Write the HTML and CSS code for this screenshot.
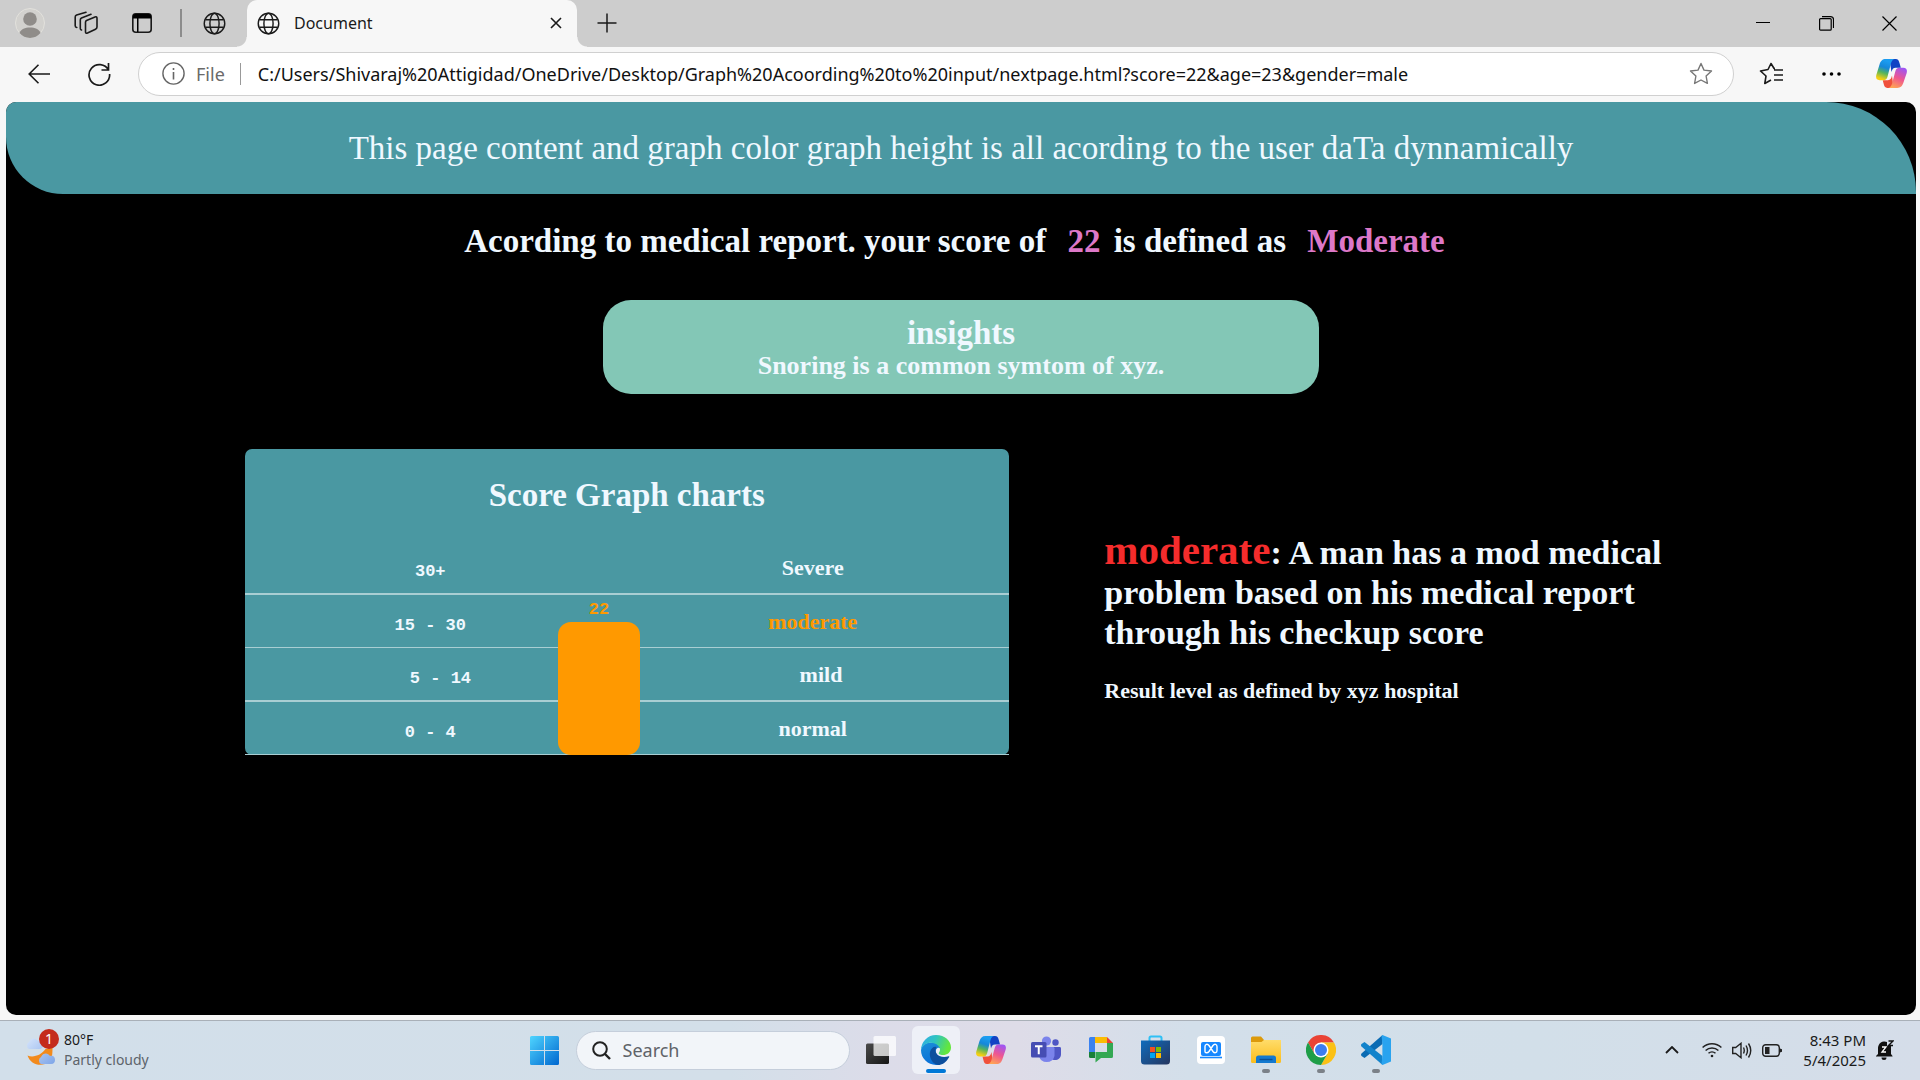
FILE: index.html
```html
<!DOCTYPE html>
<html lang="en">
<head>
<meta charset="utf-8">
<title>Document</title>
<link rel="stylesheet" href="styles.css">
</head>
<body>
<svg class="defs" width="0" height="0" aria-hidden="true">
  <defs>
    <linearGradient id="cpA" x1="0.6" y1="0" x2="0.3" y2="1"><stop offset="0.1" stop-color="#1b9cf0"/><stop offset="0.4" stop-color="#1687d9"/><stop offset="0.65" stop-color="#55b45e"/><stop offset="0.95" stop-color="#f5cf12"/></linearGradient>
    <linearGradient id="cpB" x1="0.7" y1="0" x2="0.3" y2="1"><stop offset="0" stop-color="#9f55f3"/><stop offset="0.5" stop-color="#ef5690"/><stop offset="1" stop-color="#ffa454"/></linearGradient>
    <linearGradient id="win" x1="0" y1="0" x2="1" y2="1"><stop offset="0" stop-color="#4fd5ff"/><stop offset="1" stop-color="#0067cf"/></linearGradient>
    <linearGradient id="edA" x1="0" y1="0" x2="1" y2="0.3"><stop offset="0" stop-color="#2fa9ec"/><stop offset="0.5" stop-color="#2fc4c0"/><stop offset="1" stop-color="#63e63d"/></linearGradient>
    <linearGradient id="edB" x1="0" y1="0" x2="0.4" y2="1"><stop offset="0" stop-color="#1b8ed8"/><stop offset="1" stop-color="#0a6fd8"/></linearGradient>
    <linearGradient id="store" x1="0" y1="0" x2="1" y2="1"><stop offset="0" stop-color="#0f6cbd"/><stop offset="1" stop-color="#26365f"/></linearGradient>
    <linearGradient id="fold" x1="0" y1="0" x2="0" y2="1"><stop offset="0" stop-color="#ffdc6a"/><stop offset="1" stop-color="#fbbd1c"/></linearGradient>
    <linearGradient id="cloud" x1="0" y1="0" x2="1" y2="1"><stop offset="0" stop-color="#d5e4fb"/><stop offset="1" stop-color="#7da5e8"/></linearGradient>
    <linearGradient id="tvA" x1="0" y1="0" x2="1" y2="1"><stop offset="0" stop-color="#4a4a4a"/><stop offset="1" stop-color="#161616"/></linearGradient>
    <symbol id="globe" viewBox="0 0 24 24"><g fill="none" stroke="currentColor" stroke-width="1.5"><circle cx="12" cy="12" r="10.7"/><ellipse cx="12" cy="12" rx="4.8" ry="10.7"/><path d="M2.4 8h19.2M2.4 16h19.2"/></g></symbol>
    <symbol id="copilot" viewBox="0 0 30 28">
      <path fill="#1142c4" d="M13 0h6c2.300 0 3.200 1.500 3.800 4l1.200 4.500h-5c-2.400 0-3.300 1.500-4 4z"/>
      <path fill="#f0503c" d="M17 28h-6c-2.300 0-3-1.500-3.600-4l-.9-3.500h5c2.400 0 3.300-1.700 4-4.500z"/>
      <path fill="url(#cpA)" d="M9.500 0H18c-2.500.5-3.300 3-4 6l-2.800 11c-.7 2.500-1.700 3.500-4.200 3.500H3.500c-3 0-3.900-2-3.200-5L3.500 5C4.500 2 6 0 9.500 0z"/>
      <path fill="url(#cpB)" d="M20.500 28H12c2.500-.5 3.300-3 4-6l2.800-10.300c.7-2.500 1.700-3.300 4.200-3.300h3.500c3 0 3.900 2 3.200 5L26.500 23c-1 3-2.500 5-6 5z"/>
    </symbol>
  </defs>
</svg>

<header class="tabs">
  <button class="tabs-btn" aria-label="Profile"><svg width="30" height="30" viewBox="0 0 30 30"><circle cx="15" cy="15" r="14.500" fill="#d2d1ce" stroke="#e2e1dc"/><circle cx="15" cy="11" r="6.800" fill="#8f8c89"/><path fill="#8f8c89" d="M4.500 25C6 21 10 19.500 15 19.500S24 21 25.500 25A14.500 14.500 0 0 1 15 30 14.500 14.500 0 0 1 4.500 25z"/></svg></button>
  <button class="tabs-btn" aria-label="Workspaces"><svg width="24" height="24" viewBox="0 0 24 24" fill="none" stroke="#1a1a1a" stroke-width="1.600" stroke-linejoin="round" stroke-linecap="round"><path d="M12.500 9.500 21 6q2-.7 2 1.200V16q0 1.500-1.500 2.200L13.500 22q-2 .7-2-1.300v-9.500q0-1.200 1-1.700zM7.500 19q-1.200-.3-1.200-1.500V9q0-1.400 1.200-2L17 3.300M2.800 16.500q-1.600-.2-1.600-1.800V6q0-1.500 1.400-2L12 1.200"/></svg></button>
  <button class="tabs-btn" aria-label="Tab actions"><svg width="20" height="20" viewBox="0 0 20 20"><rect x="0.800" y="0.800" width="18.400" height="18.400" rx="3" fill="none" stroke="#1a1a1a" stroke-width="1.600"/><path d="M1 5.500V3a2 2 0 0 1 2-2h14a2 2 0 0 1 2 2v2.500zM5 5h1.500v14H5z" fill="#000"/></svg></button>
  <span class="tabs-line"></span>
  <button class="tabs-pinned" aria-label="Pinned tab"><svg width="23" height="23"><use href="#globe"/></svg></button>
  <div class="tab">
    <svg width="23" height="23"><use href="#globe"/></svg>
    <span class="tab-title">Document</span>
    <button class="tab-close" aria-label="Close tab"><svg width="12" height="12" viewBox="0 0 12 12"><path d="M1 1l10 10M11 1 1 11" stroke="#1a1a1a" stroke-width="1.600"/></svg></button>
  </div>
  <button class="tabs-new" aria-label="New tab"><svg width="20" height="20" viewBox="0 0 20 20"><path d="M10 0.500v19M0.500 10h19" stroke="#1a1a1a" stroke-width="1.500"/></svg></button>
  <div class="window-controls">
    <button aria-label="Minimize"><svg width="14" height="14" viewBox="0 0 14 14"><path d="M0 6.500h14" stroke="#000"/></svg></button>
    <button aria-label="Restore"><svg width="15" height="15" viewBox="0 0 15 15" fill="none" stroke="#000" stroke-width="1.200"><rect x="0.600" y="2.600" width="11.600" height="11.600" rx="1"/><path d="M3 .6h8.500a3 3 0 0 1 3 3V12"/></svg></button>
    <button aria-label="Close"><svg width="15" height="15" viewBox="0 0 15 15"><path d="M.5.5l14 14M14.500.5l-14 14" stroke="#000" stroke-width="1.200"/></svg></button>
  </div>
</header>

<nav class="toolbar">
  <button class="tool" aria-label="Back"><svg width="22" height="20" viewBox="0 0 22 20" fill="none" stroke="#1a1a1a" stroke-width="1.600"><path d="M22 10H1M10.500.8 1.200 10l9.300 9.200"/></svg></button>
  <button class="tool" aria-label="Refresh"><svg width="24" height="24" viewBox="0 0 24 24" fill="none" stroke="#1a1a1a" stroke-width="1.700"><path d="M21.500 8.200A10.300 10.300 0 1 0 22.600 12M21.500 1v7h-7"/></svg></button>
  <div class="address">
    <svg width="23" height="23" viewBox="0 0 23 23"><circle cx="11.500" cy="11.500" r="10.600" fill="none" stroke="#666" stroke-width="1.400"/><path d="M11.500 10v7.500M11.500 6v2" stroke="#666" stroke-width="1.600"/></svg>
    <label class="address-kind" for="url">File</label>
    <input class="address-input" id="url" type="text" value="C:/Users/Shivaraj%20Attigidad/OneDrive/Desktop/Graph%20Acoording%20to%20input/nextpage.html?score=22&amp;age=23&amp;gender=male">
    <button aria-label="Add to favorites"><svg width="24" height="23" viewBox="0 0 24 23"><path d="M12 1.500l3 6.600 7.500.9-5.400 5 1.300 7.400L12 18l-6.400 3.400L6.900 14 1.500 9 9 8.100z" fill="none" stroke="#777" stroke-width="1.400" stroke-linejoin="round"/></svg></button>
  </div>
  <button class="tool" aria-label="Favorites"><svg width="24" height="23" viewBox="0 0 24 23" fill="none" stroke="#1a1a1a" stroke-width="1.600" stroke-linejoin="round"><path d="M16 6.500h-.9L12 1.500 9 7.500 1.500 9 7 14 5.800 21.500 12 18M15 8h9M15 13h9M15 18h9"/></svg></button>
  <button class="tool" aria-label="Settings and more"><svg width="19" height="4" viewBox="0 0 19 4"><circle cx="2" cy="2" r="1.800"/><circle cx="9.500" cy="2" r="1.800"/><circle cx="17" cy="2" r="1.800"/></svg></button>
  <button class="tool" aria-label="Copilot"><svg width="31" height="29"><use href="#copilot"/></svg></button>
</nav>

<main class="page">
  <h1 class="banner">This page content and graph color graph height is all acording to the user daTa dynnamically</h1>
  <h2 class="verdict">Acording to medical report. your score of <span>22</span> is defined as <span>Moderate</span></h2>
  <section class="insights">
    <h2>insights</h2>
    <p>Snoring is a common symtom of xyz.</p>
  </section>
  <div class="report">
    <section class="chart">
      <h2>Score Graph charts</h2>
      <div class="plot">
        <table class="levels">
          <tr><th scope="row">30+</th><td>Severe</td></tr>
          <tr><th scope="row">15 - 30</th><td class="current">moderate</td></tr>
          <tr><th scope="row">&nbsp;&nbsp;5 - 14</th><td>&nbsp;&nbsp;&nbsp;mild</td></tr>
          <tr><th scope="row">0 - 4</th><td>normal</td></tr>
        </table>
        <div class="bar"><span class="bar-value">22</span><span class="bar-fill" style="height: 133px"></span></div>
      </div>
    </section>
    <section class="summary">
      <h2><span>moderate</span>: A man has a mod medical problem based on his medical report through his checkup score</h2>
      <p>Result level as defined by xyz hospital</p>
    </section>
  </div>
</main>

<footer class="taskbar">
  <button class="weather">
    <span class="weather-icon">
      <svg width="32" height="30" viewBox="0 0 32 30"><path fill="#f28a1c" d="M2.500 17.500c6 2.500 14-.5 18-6.500l7-2c0 6 0 11-3 14-7 7-19 4-22-5.500z"/><path fill="url(#cloud)" d="M4 11a4 4 0 0 1 0-7C6-.5 11-.5 13 3c4-1 5 2 5 4s-1 4-4 4zM16 26a4 4 0 0 1 0-7c2-4.500 7-4.500 9-1 4-1 5 2 5 4s-1 4-4 4z"/></svg>
      <span class="badge">1</span>
    </span>
    <span class="weather-text"><span>80°F</span><span class="muted">Partly cloudy</span></span>
  </button>
  <div class="apps">
    <button class="app" aria-label="Start"><svg width="29" height="29" viewBox="0 0 29 29" fill="url(#win)"><path d="M1.500 0H14v14H0V1.500A1.500 1.500 0 0 1 1.500 0zM15 0h12.500A1.500 1.500 0 0 1 29 1.500V14H15zM0 15h14v14H1.500A1.500 1.500 0 0 1 0 27.500zM15 15h14v12.500a1.500 1.500 0 0 1-1.500 1.500H15z"/></svg></button>
    <label class="search">
      <svg width="19" height="19" viewBox="0 0 19 19"><circle cx="8" cy="8" r="6.800" fill="none" stroke="#222" stroke-width="2"/><path d="M13 13l5 5" stroke="#222" stroke-width="2.400"/></svg>
      <input type="text" placeholder="Search" aria-label="Search">
    </label>
    <button class="app" aria-label="Task view"><svg width="30" height="28" viewBox="0 0 30 28"><rect y="7.500" width="23" height="20.500" rx="1.500" fill="url(#tvA)"/><rect x="7.500" y="0" width="22.500" height="20" rx="1.500" fill="#fff" opacity="0.750"/></svg></button>
    <button class="app active" aria-label="Edge"><svg width="30" height="30" viewBox="0 0 30 30"><path fill="url(#edB)" d="M0 15C1 9 6 7.500 11 7.500c5 0 9 3 9 6.500-3-3-6 0-5 4 1 4 6 7 12 5-3 5-8 7-12 7A15 15 0 0 1 0 15z"/><path fill="#0d4f9e" d="M9 17c1-4 4-6 6.500-5-2 3-1 7 3 9 3 1.500 6 1.300 9.200.3.5 0 .8.200.4.900C25 27.500 21 30 17 30 11 29 8 22 9 17z"/><path fill="url(#edA)" d="M0 15A15 15 0 0 1 15 0c9 0 15 6 15 12.500 0 5-4 7.500-8 7.500-3.500 0-5-1.300-4-2.500 1.500-2 1.500-4.500-1-7C12 6 3 7 0 15z"/></svg></button>
    <button class="app" aria-label="Copilot"><svg width="30" height="28"><use href="#copilot"/></svg></button>
    <button class="app" aria-label="Teams"><svg width="30" height="28" viewBox="0 0 30 28"><circle cx="24.500" cy="6.500" r="3.200" fill="#4f56c4"/><path fill="#4f56c4" d="M18 11h10.500c1 0 1.500.7 1.500 1.500V18c0 4-3 6-6 6s-6-2-6-6z"/><circle cx="15.500" cy="5" r="4.600" fill="#7b83eb"/><path fill="#7b83eb" d="M8 11h14c1 0 1.500.7 1.500 1.500V20a8 8 0 0 1-15.500 0z"/><rect y="6" width="15.500" height="15.500" rx="1.500" fill="#464db3"/><path d="M4 10.200h7.500M7.750 10.200v8" stroke="#fff" stroke-width="2"/></svg></button>
    <button class="app" aria-label="Chat"><svg width="24" height="26" viewBox="0 0 24 26"><path fill="#3b82f0" d="M0 1.500A1.500 1.500 0 0 1 1.500 0H6v15H0z"/><path fill="#fbbc04" d="M6 0h12v6H6z"/><path fill="#ea4335" d="M18 0l6 6h-6z"/><path fill="#34a853" d="M18 6h6v13.500a1.500 1.500 0 0 1-1.500 1.500H12l-5.500 4.500V15H18z"/><path fill="#188038" d="M0 15h6v6H1.500A1.500 1.500 0 0 1 0 19.500z"/></svg></button>
    <button class="app" aria-label="Store"><svg width="29" height="30" viewBox="0 0 29 30"><path d="M8.500 7V3q0-1.500 1.500-1.500h9q1.500 0 1.500 1.500v4" fill="none" stroke="#2fc0f5" stroke-width="2"/><path fill="url(#store)" d="M0 5.500h29V26a3.500 3.500 0 0 1-3.500 3.500h-22A3.500 3.500 0 0 1 0 26z"/><path fill="#f25022" d="M9 12h5v5H9z"/><path fill="#7fba00" d="M15 12h5v5h-5z"/><path fill="#00a4ef" d="M9 18h5v5H9z"/><path fill="#ffb900" d="M15 18h5v5h-5z"/></svg></button>
    <button class="app" aria-label="PC Manager"><svg width="28" height="28" viewBox="0 0 28 28"><rect width="28" height="28" rx="4" fill="#fff"/><rect x="4" y="6" width="20" height="14" rx="2" fill="#1687ff"/><path d="M3 21.500h22" stroke="#1687ff" stroke-width="1.600"/><path d="M8 15.500V10.500c0-2.500 2.500-3 4-1l4 6c1.500 2 4 1.500 4-1V10.500c0-2.500-2.500-3-4-1l-4 6c-1.500 2-4 1.500-4 0z" fill="none" stroke="#fff" stroke-width="1.400"/></svg></button>
    <button class="app running" aria-label="File Explorer"><svg width="30" height="28" viewBox="0 0 30 28"><path fill="#dc9a0b" d="M0 2a1.500 1.500 0 0 1 1.500-1.500H10L13 4h15a2 2 0 0 1 2 2v4H0z"/><path fill="url(#fold)" d="M0 6h10.500L13 4h17v21.500a1.500 1.500 0 0 1-1.500 1.500h-27A1.500 1.500 0 0 1 0 25.500z"/><path fill="#1479cf" d="M5 27v-5a2.500 2.500 0 0 1 2.500-2.500h15A2.500 2.500 0 0 1 25 22v5z"/><path d="M8.500 23.500h13" stroke="#0a4f96" stroke-width="1.400"/></svg></button>
    <button class="app running" aria-label="Chrome"><svg width="30" height="30" viewBox="0 0 30 30"><path fill="#ea4335" d="M2 7.500a15 15 0 0 1 26 0H15L8.500 18.750z"/><path fill="#fbc116" d="M28 7.500A15 15 0 0 1 15 30l6.500-11.250L15 7.500z"/><path fill="#1e9e48" d="M15 30A15 15 0 0 1 2 7.500l6.500 11.250h13z"/><circle cx="15" cy="15" r="7.500" fill="#fff"/><circle cx="15" cy="15" r="6" fill="#3c7df0"/></svg></button>
    <button class="app running" aria-label="Visual Studio Code"><svg width="30" height="30" viewBox="0 0 30 30"><path fill="#0a6bb3" d="M.5 18.500 21.500 0v9L3.500 23 .5 21q-1-1.200 0-2.500z"/><path fill="#1283cb" d="M.5 11.500 21.500 30v-9L3.500 7 .5 9q-1 1.200 0 2.500z"/><path fill="#29a3ef" d="M21.500 0 30 3.500v23L21.500 30l-1-1.200.9-7V8.200l-.9-7z"/></svg></button>
  </div>
  <div class="tray">
    <button aria-label="Hidden icons"><svg width="14" height="8" viewBox="0 0 14 8"><path d="M1 7l6-6 6 6" fill="none" stroke="#1a1a1a" stroke-width="1.800"/></svg></button>
    <button class="status" aria-label="Network, volume, battery">
      <svg width="20" height="16" viewBox="0 0 20 16" fill="none" stroke="#222" stroke-width="1.500"><path d="M.6 5.500a13.500 13.500 0 0 1 18.800 0M3.600 8.500a9.200 9.200 0 0 1 12.800 0M6.500 11.300a5.200 5.200 0 0 1 7 0"/><circle cx="10" cy="14" r="1.300" fill="#222" stroke="none"/></svg>
      <svg width="20" height="17" viewBox="0 0 20 17" fill="none" stroke="#222" stroke-width="1.400"><path d="M.7 5.500h3L9 1.300v14.400l-5.300-4.200h-3zM11.500 5.500q1.500 3 0 6M14 3.500q3 5 0 10M16.500 1.500q4.500 7 0 14"/></svg>
      <svg width="20" height="13" viewBox="0 0 20 13"><rect x="0.700" y="0.700" width="16.600" height="11.600" rx="3" fill="none" stroke="#222" stroke-width="1.400"/><path d="M3 3h4.500v7H3zM18 4.500l2 .7v2.600l-2 .7z" fill="#222"/></svg>
    </button>
    <button class="clock"><span>8:43 PM</span><span>5/4/2025</span></button>
    <button aria-label="Notifications"><svg width="18" height="20" viewBox="0 0 18 20"><path fill="#111" d="M2 14V8a6.500 6.500 0 0 1 9-6v4h4v8l1.500 2v.5H0V16zM5.500 17.500h5a2.500 2.500 0 0 1-5 0z"/><path d="M6 7h4l-4 5h4" fill="none" stroke="#fff" stroke-width="1.300"/><path d="M12.500 1H17l-4.500 4.500H17" fill="none" stroke="#111" stroke-width="1.400"/></svg></button>
  </div>
</footer>
</body>
</html>
```
FILE: styles.css
```css
* { box-sizing: border-box; }

body {
  margin: 0;
  min-height: 100vh;
  display: flex;
  flex-direction: column;
  background: #f7f7f7;
  color: #1a1a1a;
  font: 16px/20px "Noto Sans", "Open Sans", sans-serif;
}

h1, h2, p { margin: 0; }
svg { display: block; flex: none; }
.defs { position: absolute; }

button {
  display: flex;
  align-items: center;
  justify-content: center;
  padding: 0;
  border: 0;
  background: none;
  color: inherit;
  font: inherit;
}

input { min-width: 0; padding: 0; border: 0; background: none; font: inherit; outline: 0; }

/* Tab strip */
.tabs {
  display: flex;
  align-items: center;
  height: 47px;
  padding: 0 0 1px 2px;
  background: #cdcdcd;
}
.tabs-btn { width: 56px; height: 46px; }
.tabs-line { width: 2px; height: 28px; margin: 0 8px 0 10px; background: #8c8c8c; }
.tabs-pinned { width: 48px; height: 46px; }
.tab {
  position: relative;
  align-self: flex-start;
  display: flex;
  align-items: center;
  gap: 14px;
  width: 330px;
  height: 47px;
  margin-left: 9px;
  padding: 0 11px 1px 10px;
  border-radius: 10px 10px 0 0;
  background: #f7f7f7;
}
.tab::before, .tab::after {
  content: "";
  position: absolute;
  bottom: 0;
  width: 10px;
  height: 10px;
}
.tab::before { right: 100%; background: radial-gradient(circle at 0 0, transparent 9px, #f7f7f7 10px); }
.tab::after { left: 100%; background: radial-gradient(circle at 100% 0, transparent 9px, #f7f7f7 10px); }
.tab-title { flex: 1; }
.tab-close { width: 20px; height: 20px; }
.tabs-new { width: 40px; height: 40px; margin-left: 10px; }
.window-controls { display: flex; gap: 1px; margin-left: auto; }
.window-controls button { width: 62px; height: 46px; }

/* Address row */
.toolbar {
  display: flex;
  align-items: center;
  gap: 10px;
  height: 55px;
  padding: 0 4px 2px 14px;
}
.tool { width: 50px; height: 44px; }
.address {
  flex: 1;
  display: flex;
  align-items: center;
  height: 44px;
  margin: 0 2px 0 4px;
  padding: 0 20px 0 23px;
  border: 1px solid #d0d0d0;
  border-radius: 22px;
  background: #fff;
  font-size: 18px;
}
.address-kind {
  margin: 0 17px 0 11px;
  padding-right: 15px;
  border-right: 1px solid #999;
  color: #6a6a6a;
  line-height: 22px;
}
.address-input { flex: 1; height: 30px; color: #111; }

/* Page */
.page {
  flex: 1;
  margin: 0 4px 5px 6px;
  border-radius: 10px;
  overflow: hidden;
  background: #000;
  color: aliceblue;
  font-family: "Liberation Serif", "Times New Roman", serif;
}
.banner {
  padding: 26px 0;
  border-radius: 0 90px 0 57px;
  background: #4a98a2;
  font-size: 33px;
  font-weight: 400;
  line-height: 40px;
  text-align: center;
}
.verdict {
  margin-top: 27px;
  padding-right: 8px;
  font-size: 33px;
  line-height: 40px;
  text-align: center;
}
.verdict span { margin: 0 5px 0 13px; color: #dd78c8; }
.insights {
  width: 37.5%;
  margin: 39px auto 55px;
  padding: 15px 0 13px;
  border-radius: 28px;
  background: #83c7b6;
  text-align: center;
}
.insights h2 { font-size: 33px; line-height: 36px; }
.insights p { font-size: 26px; font-weight: 700; line-height: 30px; }

.report {
  display: flex;
  justify-content: center;
  align-items: flex-start;
  gap: 5%;
}
.chart { width: 40%; border-radius: 7px; background: #4a98a2; }
.chart h2 { padding: 26px 0; font-size: 33px; line-height: 40px; text-align: center; }
.plot { position: relative; }
.levels {
  width: 100%;
  border-collapse: separate;
  border-spacing: 0;
  table-layout: fixed;
  font-size: 22px;
  font-weight: 700;
  text-align: center;
}
.levels th, .levels td { height: 54px; padding: 0; border-bottom: 2px solid #a9ced3; }
.levels tr:nth-child(even) th, .levels tr:nth-child(even) td { height: 53px; border-bottom-width: 1px; }
.levels th {
  padding: 10px 11px 0 0;
  font: 700 17px/20px "Liberation Mono", "Courier New", monospace;
}
.levels td { padding: 2px 10px 0 0; }
.levels .current { color: #ff9900; }
.bar {
  position: absolute;
  bottom: 0;
  left: 41%;
  display: flex;
  flex-direction: column;
  align-items: center;
  width: 82px;
}
.bar-value {
  margin-bottom: 2px;
  color: #ff9900;
  font: 700 17px/20px "Liberation Mono", "Courier New", monospace;
}
.bar-fill { width: 100%; border-radius: 13px; background: #ff9900; }

.summary { width: 30%; padding-top: 81px; }
.summary h2 { font-size: 34px; line-height: 40px; }
.summary h2 span { color: #f52c2c; font-size: 41px; line-height: 1; }
.summary p { margin-top: 26px; font-size: 22px; font-weight: 700; line-height: 24px; }

/* Taskbar */
.taskbar {
  display: grid;
  grid-template-columns: 1fr auto 1fr;
  align-items: center;
  height: 60px;
  padding-bottom: 1px;
  border-top: 1px solid #a9b0b8;
  background: linear-gradient(90deg, #d2dfea 0%, #d3dfe9 38%, #dcdce9 46%, #dedce8 53%, #d3dfea 62%, #d2dfe9 80%, #d5dde9 100%);
}
.weather { justify-self: start; gap: 9px; padding-left: 25px; text-align: left; font-size: 14px; }
.weather-icon { position: relative; width: 30px; padding-top: 5px; }
.badge {
  position: absolute;
  top: -4px;
  left: 14px;
  width: 20px;
  height: 20px;
  border-radius: 50%;
  background: #c42b1c;
  color: #fff;
  line-height: 20px;
  text-align: center;
}
.weather-text, .clock { display: flex; flex-direction: column; }
.muted { color: #5d646b; }
.apps { display: flex; align-items: center; gap: 7px; }
.app { position: relative; width: 48px; height: 48px; border-radius: 6px; }
.active { background: #eef0f7; }
.active::after, .running::after {
  content: "";
  position: absolute;
  bottom: 1px;
  width: 8px;
  height: 4px;
  border-radius: 2px;
  background: #7b8188;
}
.active::after { width: 20px; background: #0078d7; }
.search {
  display: flex;
  align-items: center;
  gap: 12px;
  width: 274px;
  height: 39px;
  padding: 0 15px;
  border: 1px solid #c5cedb;
  border-radius: 20px;
  background: #f2f5f9;
  font-size: 18px;
}
.search input { flex: 1; height: 30px; }
.search input::placeholder { color: #5f6368; opacity: 1; }
.tray { display: flex; justify-content: flex-end; align-items: center; padding-right: 26px; }
.status { gap: 10px; margin: 0 21px 0 23px; }
.clock { align-items: flex-end; margin-right: 10px; font-size: 15px; }
```
